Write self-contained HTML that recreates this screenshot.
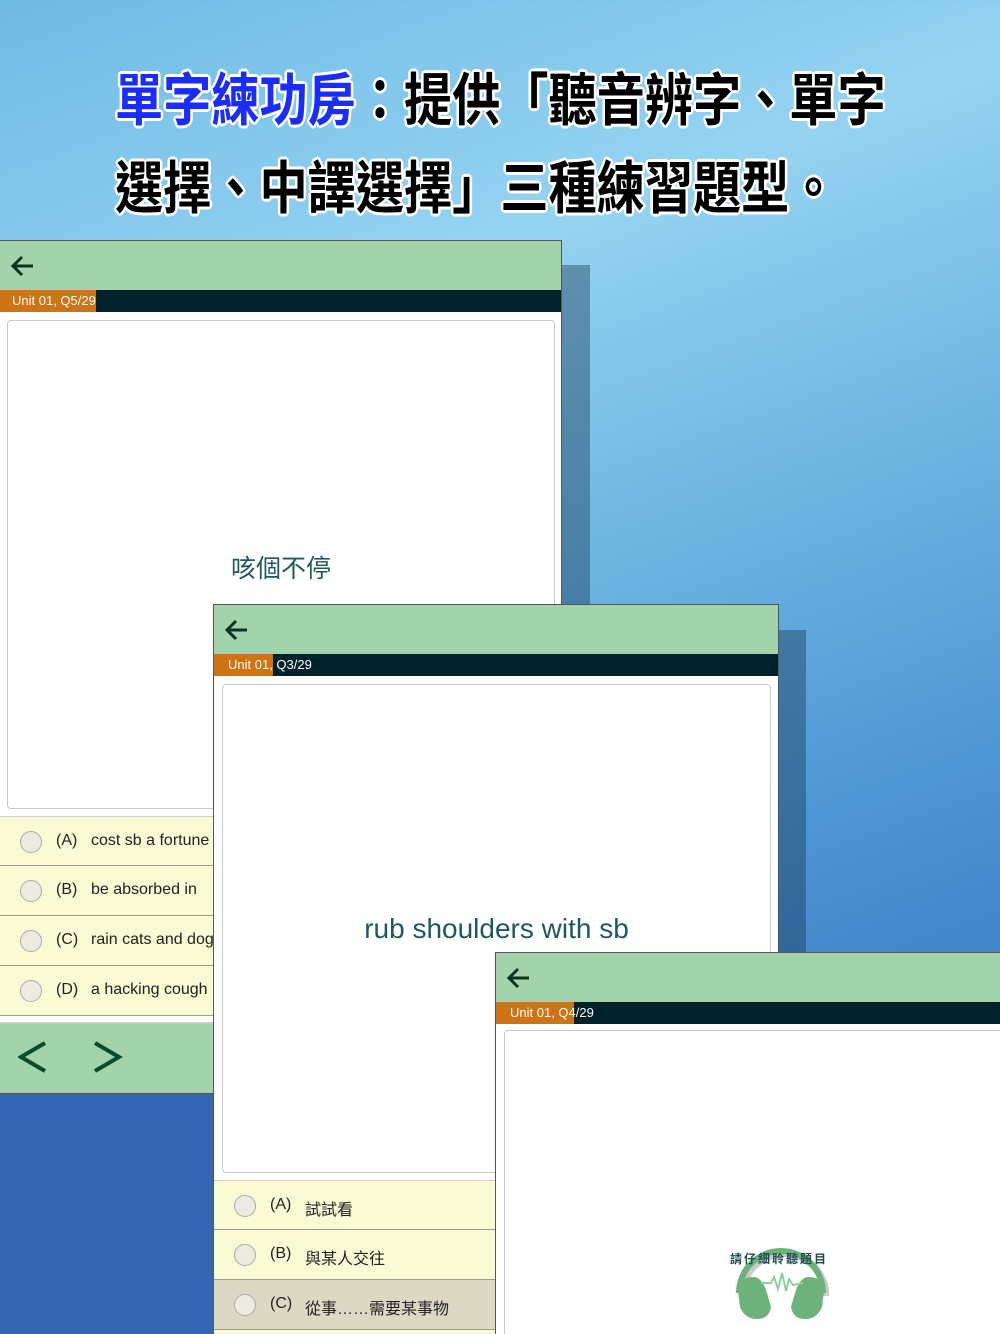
<!DOCTYPE html>
<html><head><meta charset="utf-8">
<style>
*{margin:0;padding:0;box-sizing:border-box}
html{width:1000px;height:1334px;overflow:hidden}
body{width:1000px;height:1334px;overflow:hidden;position:relative;font-family:"Liberation Sans","Noto Sans CJK TC",sans-serif;
background:linear-gradient(160deg,#6fbae6 0%,#95d3f1 25%,#6fb6e2 45%,#4f97d4 65%,#3a78c4 85%,#2f63b0 100%);}
.bgl{position:absolute;left:0;top:1093px;width:213px;height:241px;background:#3566b4}
.title{position:absolute;left:115px;font-size:57px;font-weight:bold;white-space:nowrap;transform-origin:0 0;transform:scaleX(0.845);
color:#000;text-shadow:0 0 3px #fff,2px 2px 0 #fff,-2px -2px 0 #fff,2px -2px 0 #fff,-2px 2px 0 #fff,3px 0 0 #fff,-3px 0 0 #fff,0 3px 0 #fff,0 -3px 0 #fff;font-family:"Noto Sans CJK TC","WenQuanYi Zen Hei",sans-serif}
.title .b{color:#1a2cff}
.panel{position:absolute;background:#fff;border:1px solid #555;overflow:hidden}
.shadow{position:absolute;background:rgba(20,50,80,.4)}
.hdr{position:absolute;left:0;right:0;top:0;height:49px;background:#a2d3ab}
.arrow{position:absolute;left:10px;top:13px}
.bar{position:absolute;left:0;right:0;top:49px;height:22px;background:#00222a}
.prog{position:absolute;left:0;top:0;height:22px;background:#cf7314}
.bar span{position:absolute;left:11px;top:3px;color:#fff;font-size:13px}
.card{position:absolute;border:1.5px solid #c8c8c8;border-radius:4px;background:#fff}
.opt{position:absolute;left:0;right:0;height:50px;background:#fafad4;border-bottom:1.5px solid #9a9a90;font-size:16px;color:#222}
.opt .r{position:absolute;left:20px;top:14px;width:22px;height:22px;border-radius:50%;border:1.5px solid #aaa;background:#eeeae0}
.opt .l{position:absolute;left:56px;top:15px}
.opt .t{position:absolute;left:91px;top:15px;white-space:nowrap}
</style></head><body>
<div class="bgl"></div>
<div class="title" style="top:55px"><span class="b">單字練功房</span>：提供「聽音辨字、單字</div>
<div class="title" style="top:143px">選擇、中譯選擇」三種練習題型。</div>

<div class="shadow" style="left:562px;top:265px;width:28px;height:340px"></div>
<div class="panel" style="left:-1px;top:240px;width:563px;height:854px">
 <div class="hdr"></div>
 <svg class="arrow" width="26" height="24" viewBox="0 0 26 24"><path d="M23 12H4M12 3l-9 9 9 9" stroke="#0d3320" stroke-width="3" fill="none"/></svg>
 <div class="bar"><div class="prog" style="width:96px"></div><span style="left:12px">Unit 01, Q5/29</span></div>
 <div class="card" style="left:7px;top:79px;width:548px;height:489px">
  <div style="position:absolute;left:0;right:0;top:228px;text-align:center;font-size:25px;color:#1e5a5a">咳個不停</div>
 </div>
 <div class="opt" style="top:575px;border-top:1.5px solid #ccc"><div class="r"></div><div class="l">(A)</div><div class="t">cost sb a fortune</div></div>
 <div class="opt" style="top:625px"><div class="r"></div><div class="l">(B)</div><div class="t">be absorbed in</div></div>
 <div class="opt" style="top:675px"><div class="r"></div><div class="l">(C)</div><div class="t">rain cats and dogs</div></div>
 <div class="opt" style="top:725px"><div class="r"></div><div class="l">(D)</div><div class="t">a hacking cough</div></div>
 <div style="position:absolute;left:0;right:0;top:781px;height:73px;background:#a2d3ab;border-top:2px solid #ccc"></div>
 <svg style="position:absolute;left:18px;top:799px" width="110" height="34" viewBox="0 0 110 34"><path d="M27 3L3 17l24 14M77 3l24 14-24 14" stroke="#0d4a2a" stroke-width="4" fill="none"/></svg>
</div>

<div class="shadow" style="left:778px;top:630px;width:28px;height:322px"></div>
<div class="panel" style="left:213px;top:604px;width:566px;height:740px">
 <div class="hdr"></div>
 <svg class="arrow" width="26" height="24" viewBox="0 0 26 24"><path d="M23 12H4M12 3l-9 9 9 9" stroke="#0d3320" stroke-width="3" fill="none"/></svg>
 <div class="bar"><div class="prog" style="width:59px"></div><span style="left:14px">Unit 01, Q3/29</span></div>
 <div class="card" style="left:8px;top:79px;width:549px;height:489px">
  <div style="position:absolute;left:0;right:0;top:228px;text-align:center;font-size:28px;color:#1e5a5a">rub shoulders with sb</div>
 </div>
 <div class="opt" style="top:575px;border-top:1.5px solid #ccc"><div class="r"></div><div class="l">(A)</div><div class="t">試試看</div></div>
 <div class="opt" style="top:625px"><div class="r"></div><div class="l">(B)</div><div class="t">與某人交往</div></div>
 <div class="opt" style="top:675px;background:#ddd8c4"><div class="r"></div><div class="l">(C)</div><div class="t">從事……需要某事物</div></div>
 <div class="opt" style="top:725px"></div>
</div>

<div class="panel" style="left:495px;top:952px;width:510px;height:390px">
 <div class="hdr"></div>
 <svg class="arrow" width="26" height="24" viewBox="0 0 26 24"><path d="M23 12H4M12 3l-9 9 9 9" stroke="#0d3320" stroke-width="3" fill="none"/></svg>
 <div class="bar"><div class="prog" style="width:78px"></div><span style="left:14px">Unit 01, Q4/29</span></div>
 <div class="card" style="left:8px;top:77px;width:520px;height:330px"></div>
 <svg style="position:absolute;left:235px;top:278px" width="100" height="90" viewBox="0 0 100 90">
  <path d="M8 62 A42 42 0 0 1 92 62" stroke="#ccc" stroke-width="7" fill="none" transform="translate(3,3)"/>
  <path d="M8 62 A42 42 0 0 1 92 62" stroke="#6db27a" stroke-width="6" fill="none"/>
  <path d="M7 60 Q8 45 24 46 Q32 48 36 62 L40 76 Q38 88 26 88 Q14 88 9 76Z" fill="#6db27a"/>
  <path d="M93 60 Q92 45 76 46 Q68 48 64 62 L60 76 Q62 88 74 88 Q86 88 91 76Z" fill="#6db27a"/>
  <path d="M30 52 L40 52 L43 46 L47 58 L51 42 L55 60 L58 48 L62 54 L72 52" stroke="#8fd09a" stroke-width="2" fill="none"/>
 </svg>
 <div style="position:absolute;left:234px;top:297px;font-size:12px;font-weight:bold;color:#1e4d4d;letter-spacing:2px">請仔細聆聽題目</div>
</div>
</body></html>
